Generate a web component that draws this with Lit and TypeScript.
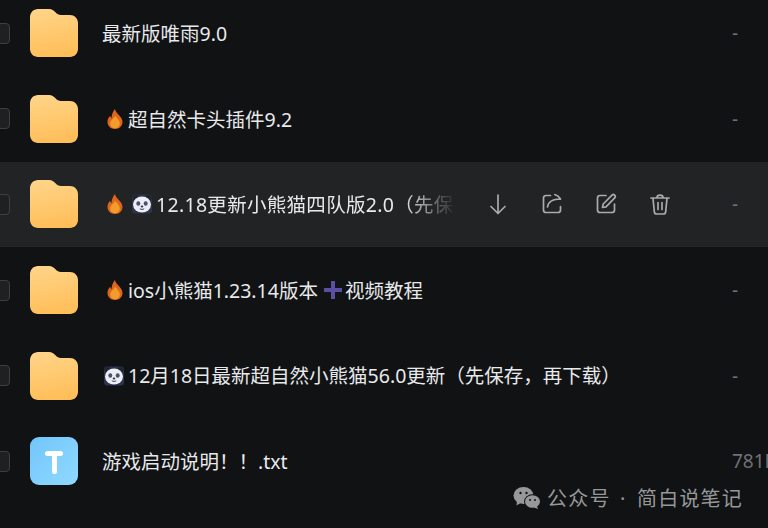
import { LitElement, html, css, svg } from "lit";
import { customElement } from "lit/decorators.js";

const flame = html`<svg class="emo flame" viewBox="0 0 16 20"><path fill="#df651c" d="M8 0c.5 2.800 2.400 4.300 4.300 6.500C14 8.500 15.500 10.500 15.500 13c0 4.200-3.400 7-7.500 7s-7.500-2.800-7.500-7c0-2.800 1.300-4.700 2.700-6.200.2 1.200.6 2 1.300 2.500C4.600 5.800 5.800 2.600 8 0z"/><path fill="#f29c2b" d="M8.200 6.500c.6 2 4.600 4 4.600 8 0 3-2.200 4.800-4.800 4.800s-4.800-1.800-4.800-4.800c0-3.700 4.200-4.800 5-8z"/></svg>`;

const panda = html`<svg class="emo panda" viewBox="0 0 20 20"><rect width="20" height="19" y="0.500" rx="3" fill="#2b3350"/><circle cx="3.500" cy="4" r="3" fill="#20242f"/><circle cx="16.500" cy="4" r="3" fill="#20242f"/><ellipse cx="10" cy="10.500" rx="9" ry="8" fill="#eceef3"/><ellipse cx="6.300" cy="9.500" rx="2" ry="2.300" fill="#4b5170"/><ellipse cx="13.700" cy="9.500" rx="2" ry="2.300" fill="#4b5170"/><ellipse cx="10" cy="12.500" rx="1.300" ry="0.900" fill="#2b3350"/><path d="M7.800 14.800q2.200 1.400 4.400 0" stroke="#2b3350" fill="none" stroke-width=".9"/></svg>`;

const plus = html`<svg class="plus" viewBox="0 0 20 20"><path fill="#5b4fa3" d="M8 1h4v7h7v4h-7v7H8v-7H1V8h7z"/></svg>`;

const folderPaths = svg`<path fill="url(#fg)" d="M8 0h11c3 0 4.500 1.300 6.500 3.300 1.700 1.700 3 2.700 5.500 2.700h9c4.400 0 8 3.300 8 8v26c0 4.400-3.600 8-8 8H8c-4.400 0-8-3.600-8-8V8c0-4.400 3.600-8 8-8z"/>`;
const folder = html`<svg class="fico" viewBox="0 0 48 48"><defs><linearGradient id="fg" x1="0.300" y1="0" x2="0.500" y2="1"><stop offset="0" stop-color="#ffd488"/><stop offset="1" stop-color="#ffbe58"/></linearGradient></defs>${folderPaths}</svg>`;

const txt = html`<div class="fico txt"><span class="tbar"></span><span class="tstem"></span></div>`;

const actions = html`<div class="actions">
  <svg viewBox="0 0 24 24"><path d="M12 3v18M5 14.500l7 7 7-7"/></svg>
  <svg viewBox="0 0 24 24"><path d="M10.500 3.500H6A2.500 2.500 0 0 0 3.500 6v12A2.500 2.500 0 0 0 6 20.500h12a2.500 2.500 0 0 0 2.500-2.500v-3.500"/><path d="M7.500 15c.6-4.800 4.500-8 13-8M14.800 2.500c2.400.8 4.400 2.500 5.700 4.500"/></svg>
  <svg viewBox="0 0 24 24"><path d="M12 3.500H6A2.500 2.500 0 0 0 3.500 6v12A2.500 2.500 0 0 0 6 20.500h12a2.500 2.500 0 0 0 2.500-2.500v-6"/><path d="M8.500 15.500l.7-3.500L18 3.200a1.800 1.800 0 0 1 2.700 2.600L12 14.800z"/></svg>
  <svg viewBox="0 0 24 24"><path d="M3 6h18M9 5.500c0-3.300 6-3.300 6 0M5 6.500l1.300 13A2.500 2.500 0 0 0 8.800 22h6.400a2.500 2.500 0 0 0 2.500-2.500L19 6.500M10 10.500v7M14 10.500v7"/></svg>
</div>`;

@customElement("app-root")
export class AppRoot extends LitElement {
  static styles = css`
    :host {
      display: block;
      width: 768px;
      height: 528px;
      overflow: hidden;
      position: relative;
      background: #101214;
      font-family: "Noto Sans", "Noto Sans CJK SC", sans-serif;
    }
    .list { margin-top: -9.5px; display: flex; flex-direction: column; }
    .row {
      height: 85.6px;
      flex: none;
      display: flex;
      align-items: center;
      width: 800px;
    }
    .row.hover { background: #212325; }
    .check {
      width: 21px;
      height: 21px;
      margin-left: -11px;
      margin-right: 20px;
      box-sizing: border-box;
      flex: none;
      border-radius: 4px;
      border: 1px solid #3d3f42;
      background: #1f2022;
    }
    .fico { width: 48px; height: 48px; flex: none; display: block; }
    .txt {
      position: relative;
      border-radius: 9px;
      background: linear-gradient(135deg, #72c6fc, #8fd9ff);
    }
    .tbar, .tstem { position: absolute; background: #fff; border-radius: 2.500px; }
    .tbar { left: 15px; top: 14px; width: 18px; height: 5px; }
    .tstem { left: 21.500px; top: 14px; width: 5px; height: 23px; }
    .name {
      margin-left: 24px;
      width: 630px;
      flex: none;
      display: flex;
      align-items: center;
      color: #e8e9eb;
      font-size: 19.500px;
      white-space: nowrap;
      overflow: hidden;
    }
    .label { display: block; margin-bottom: 1.500px; }
    .wide { letter-spacing: 0.300px; }
    .hover .name {
      width: 354px;
      -webkit-mask-image: linear-gradient(90deg, #000 85%, transparent 100%);
      mask-image: linear-gradient(90deg, #000 85%, transparent 100%);
    }
    .emo { flex: none; display: block; }
    .flame { width: 16px; height: 20px; margin-left: 5px; margin-right: 5px; }
    .panda { width: 20px; height: 20px; margin-right: 4px; }
    .flame + .panda { margin-left: 4px; }
    .plus { width: 20px; height: 20px; flex: none; margin: 0 2px 0 5px; }
    .lead { width: 2px; flex: none; }
    .actions {
      width: 276px;
      flex: none;
      display: flex;
      gap: 30px;
      padding-left: 30px;
      box-sizing: border-box;
    }
    .actions svg {
      width: 24px;
      height: 24px;
      flex: none;
      fill: none;
      stroke: #a9abad;
      stroke-width: 1.700;
      stroke-linecap: round;
      stroke-linejoin: round;
    }
    .size { color: #6f7173; font-size: 19px; white-space: nowrap; }
    .mark {
      position: absolute;
      left: 513px;
      top: 483px;
      display: flex;
      align-items: center;
      gap: 6px;
      color: #97989a;
      font-size: 20px;
      letter-spacing: 1.200px;
      white-space: nowrap;
    }
    .mark svg { width: 28px; height: 24px; flex: none; }
    .dot { margin: 0 4px 0 3px; }
  `;

  private row(icon: unknown, name: unknown, size = "-", hover = false) {
    return html`<div class="row ${hover ? "hover" : ""}">
      <div class="check"></div>
      ${icon}
      <div class="name">${name}</div>
      ${hover ? actions : ""}
      <div class="size">${size}</div>
    </div>`;
  }

  private label(t: string, wide = false) {
    return html`<span class="label ${wide ? "wide" : ""}">${t}</span>`;
  }

  render() {
    return html`<div class="list">
        ${this.row(folder, this.label("最新版唯雨9.0"))}
        ${this.row(folder, html`${flame}${this.label("超自然卡头插件9.2")}`)}
        ${this.row(folder, html`${flame}${panda}${this.label("12.18更新小熊猫四队版2.0（先保存，再下载）", true)}`, "-", true)}
        ${this.row(folder, html`${flame}${this.label("ios小熊猫1.23.14版本")}${plus}${this.label("视频教程")}`)}
        ${this.row(folder, html`<span class="lead"></span>${panda}${this.label("12月18日最新超自然小熊猫56.0更新（先保存，再下载）")}`)}
        ${this.row(txt, this.label("游戏启动说明！！.txt"), "781B")}
      </div>
      <div class="mark">
        <svg viewBox="0 0 28 24">
          <ellipse cx="10.500" cy="9.500" rx="10" ry="8.500" fill="#97989a"/>
          <path d="M4 15l-.5 4.500 5-3z" fill="#97989a"/>
          <ellipse cx="19.500" cy="15.500" rx="8.500" ry="7.200" fill="#101214"/>
          <ellipse cx="19.500" cy="15.500" rx="7.500" ry="6.300" fill="#97989a"/>
          <path d="M24 20l1 3-4-1.500z" fill="#97989a"/>
          <circle cx="7.500" cy="7" r="1.200" fill="#101214"/>
          <circle cx="13.500" cy="7" r="1.200" fill="#101214"/>
          <circle cx="17" cy="14" r="1" fill="#101214"/>
          <circle cx="22" cy="14" r="1" fill="#101214"/>
        </svg>
        <span>公众号<span class="dot"> · </span>简白说笔记</span>
      </div>`;
  }
}
